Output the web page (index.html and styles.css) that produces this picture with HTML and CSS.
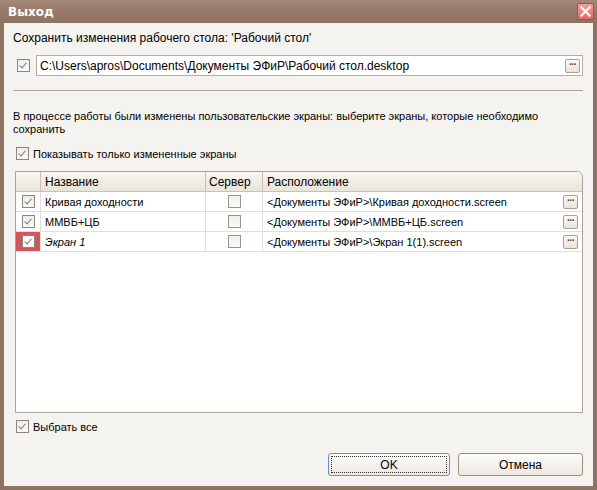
FILE: index.html
```html
<!DOCTYPE html>
<html>
<head>
<meta charset="utf-8">
<title>Выход</title>
<link rel="stylesheet" href="styles.css">
</head>
<body>
<div class="window">
  <div class="titlebar">
    <span class="title">Выход</span>
    <span class="close"><svg width="11" height="11" viewBox="0 0 11 11"><path d="M1.5 1.5 L9.5 9.5 M9.5 1.5 L1.5 9.5" stroke="#fff" stroke-width="2.2" stroke-linecap="square"/></svg></span>
  </div>
  <div class="body">
    <div class="label">Сохранить изменения рабочего стола: 'Рабочий стол'</div>
    <div class="pathRow">
      <span class="chk on"></span>
      <div class="field">
        <span class="fieldText">C:\Users\apros\Documents\Документы ЭФиР\Рабочий стол.desktop</span>
        <span class="dots">&middot;&middot;&middot;</span>
      </div>
    </div>
    <div class="sep"></div>
    <div class="info">В процессе работы были изменены пользовательские экраны: выберите экраны, которые необходимо сохранить</div>
    <div class="chkRow"><span class="chk on"></span>Показывать только измененные экраны</div>

    <div class="grid">
      <div class="row head">
        <div class="c1"></div>
        <div class="c2">Название</div>
        <div class="c3">Сервер</div>
        <div class="c4">Расположение</div>
      </div>
      <div class="row">
        <div class="c1"><span class="chk on"></span></div>
        <div class="c2">Кривая доходности</div>
        <div class="c3"><span class="box"></span></div>
        <div class="c4"><span class="cellText">&lt;Документы ЭФиР&gt;\Кривая доходности.screen</span><span class="dots">&middot;&middot;&middot;</span></div>
      </div>
      <div class="row">
        <div class="c1"><span class="chk on"></span></div>
        <div class="c2">ММВБ+ЦБ</div>
        <div class="c3"><span class="box"></span></div>
        <div class="c4"><span class="cellText">&lt;Документы ЭФиР&gt;\ММВБ+ЦБ.screen</span><span class="dots">&middot;&middot;&middot;</span></div>
      </div>
      <div class="row">
        <div class="c1 hot"><span class="chk on"></span></div>
        <div class="c2 new">Экран 1</div>
        <div class="c3"><span class="box"></span></div>
        <div class="c4"><span class="cellText">&lt;Документы ЭФиР&gt;\Экран 1(1).screen</span><span class="dots">&middot;&middot;&middot;</span></div>
      </div>
    </div>

    <div class="chkRow all"><span class="chk on"></span>Выбрать все</div>

    <div class="buttons">
      <div class="btn ok"><span class="focus">OK</span></div>
      <div class="btn">Отмена</div>
    </div>
  </div>
</div>
</body>
</html>
```
FILE: styles.css
```css
body{margin:0; font-family:"Liberation Sans", Arial, sans-serif; font-size:11px; color:#000;}

.window{width:597px; height:490px; box-sizing:border-box; background:#8f7362; padding:0 4px 4px 4px; display:flex; flex-direction:column;}
.titlebar{height:23px; margin:0 -4px; padding:0 3px 0 8px; display:flex; align-items:center; justify-content:space-between; background:linear-gradient(#a48878, #957766 60%, #8f7261);}
.title{color:#fff; font-weight:bold; font-size:12px; font-family:"DejaVu Sans", sans-serif;}
.close{width:17px; height:17px; box-sizing:border-box; border:1px solid #b04a4a; background:linear-gradient(#f2a0a0, #e06a6a); display:flex; align-items:center; justify-content:center; border-radius:2px;}

.body{flex:1; background:#f5f3ef; padding:9px 10px 0 9px; display:flex; flex-direction:column;}

.label{height:13px; line-height:13px; font-size:12px;}
.pathRow{display:flex; align-items:center; margin-top:10px; height:21px;}
.pathRow .chk{margin:0 6px 0 4px;}
.field{flex:1; height:21px; box-sizing:border-box; border:1px solid #b5ad9f; background:#fff; display:flex; align-items:center; justify-content:space-between; padding:0 2px 0 3px; font-size:12px;}

.dots{width:15px; height:14px; box-sizing:border-box; border:1px solid #a8a090; border-radius:2px; background:linear-gradient(#fbfaf7, #e8e3d8); font-size:10px; line-height:9px; text-align:center; color:#444; font-weight:bold; letter-spacing:-1px;}

.sep{height:1px; background:#aca596; margin:14px 0 0 0;}
.info{margin-top:19px; line-height:13px; width:560px;}

.chkRow{display:flex; align-items:center; height:13px; margin-top:11px; padding-left:3px;}
.chkRow .chk{margin-right:4px;}

.chk{display:inline-block; width:13px; height:13px; box-sizing:border-box; border:1px solid #8c8579; background:linear-gradient(#f0ede7, #fbfaf8); position:relative; flex:none;}
.chk.on::after{content:""; position:absolute; left:3px; top:1px; width:3px; height:6px; border:solid #7c7c7c; border-width:0 1px 1px 0; transform:rotate(40deg);}
.box{display:inline-block; width:13px; height:13px; box-sizing:border-box; border:1px solid #9a9386; background:linear-gradient(#f2efea, #fbfaf8);}

.grid{margin:11px 0 0 2px; height:242px; box-sizing:border-box; border:1px solid #aca596; border-radius:0 6px 0 0; background:#fff; width:568px;}
.row{display:flex; height:20px; box-sizing:border-box; border-bottom:1px solid #e3ded4;}
.row > div{display:flex; align-items:center; box-sizing:border-box; border-right:1px solid #e3ded4;}
.row .c1{width:25px; justify-content:center;}
.row .c2{width:165px; padding-left:4px;}
.row .c3{width:57px; justify-content:center;}
.row .c4{flex:1; padding:0 4px; justify-content:space-between; border-right:none;}
.row.head{height:20px; font-size:12px; background:linear-gradient(#f8f6f1, #e9e4d9); border-bottom:1px solid #c9c2b4; border-radius:0 6px 0 0;}
.row.head > div{border-right:1px solid #c9c2b4;}
.row.head .c3{justify-content:flex-start; padding-left:3px;}
.row.head .c4{border-right:none;}
.c1.hot{background:#d2555c;}
.c1.hot .chk{background:#fbfaf8;}
.new{font-style:italic;}

.all{margin-top:7px;}

.buttons{display:flex; justify-content:flex-end; gap:8px; margin-top:20px;}
.btn{width:122px; height:23px; box-sizing:border-box; border:1px solid #9c8f7e; border-radius:3px; background:linear-gradient(#fdfcfa, #ece8df); display:flex; align-items:center; justify-content:center; font-size:12px;}
.btn + .btn{width:125px;}
.btn.ok{border-color:#6c8fc7; padding:2px;}
.focus{width:100%; height:100%; box-sizing:border-box; border:1px dotted #333; display:flex; align-items:center; justify-content:center;}
```
